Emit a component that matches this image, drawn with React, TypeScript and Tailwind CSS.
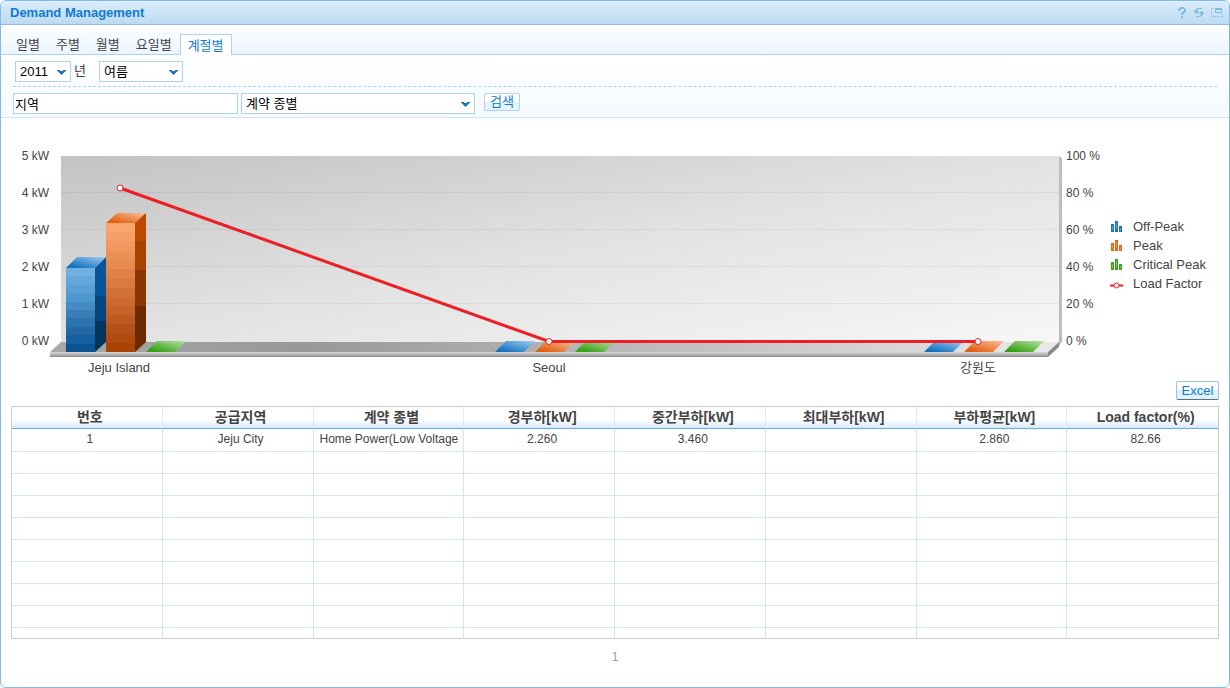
import React from "react";

const tabs = ["일별", "주별", "월별", "요일별", "계절별"];

const columns = [
  "번호",
  "공급지역",
  "계약 종별",
  "경부하[kW]",
  "중간부하[kW]",
  "최대부하[kW]",
  "부하평균[kW]",
  "Load factor(%)",
];

const rows = [
  ["1", "Jeju City", "Home Power(Low Voltage", "2.260", "3.460", "", "2.860", "82.66"],
];

const emptyRows = Array.from({ length: 9 }, (_, i) => i);

function Chevron() {
  return (
    <svg
      className="pointer-events-none absolute right-[5px] top-1/2 -mt-0.5"
      width="9"
      height="5"
      viewBox="0 0 9 5"
      shapeRendering="crispEdges"
      aria-hidden="true"
    >
      <path d="M0 0h3v1h3v-1h3v1h-1v1h-1v1h-1v1h-1v1h-1v-1h-1v-1h-1v-1h-1v-1h-1z" fill="#0f7bd0" />
    </svg>
  );
}

type DropDownProps = { label: string; options: string[]; className: string };

function DropDown({ label, options, className }: DropDownProps) {
  return (
    <span className={"relative block h-[21px] " + className}>
      <select
        aria-label={label}
        className="block h-full w-full appearance-none border border-[#b2d2ec] bg-white pl-1 pr-4 text-[13px] leading-4 text-black outline-none"
      >
        {options.map((o) => (
          <option key={o}>{o}</option>
        ))}
      </select>
      <Chevron />
    </span>
  );
}

function HelpIcon() {
  return (
    <svg width="10" height="12" viewBox="0 0 10 12" shapeRendering="crispEdges" fill="#7dbde8">
      <path d="M3 0h4v1h1v1h1v3h-1v1h-1v1h-1v1h-2v-2h1v-1h1v-1h1v-2h-3v1h-1v1h-2v-2h1v-1h1zM4 9h2v2h-2z" />
    </svg>
  );
}

function RefreshIcon() {
  return (
    <svg width="10" height="10" viewBox="0 0 10 10" shapeRendering="crispEdges" fill="#7dbde8">
      <path d="M3 0h5v1h-4v1h-1v1h2v1h-1v1h-1v1h-1v-1h-1v-1h-1v-1h1v-1h1v-1h1z" />
      <path d="M7 3h1v1h1v1h1v1h-1v1h-1v1h-1v1h-5v-1h4v-1h1v-1h-2v-1h1v-1h1z" />
    </svg>
  );
}

function WindowIcon() {
  return (
    <svg width="12" height="10" viewBox="0 0 12 10" shapeRendering="crispEdges">
      <path d="M0 .5h4M0 8.500h12" stroke="#7dbde8" strokeDasharray="1 1" />
      <path d="M.5 0v9M11.5 6v3" stroke="#7dbde8" strokeDasharray="1 1" />
      <path d="M4 0h7v5h-7zM5 2v2h5v-2z" fill="#7dbde8" fillRule="evenodd" />
    </svg>
  );
}

const blueBands = ["#72b0e2", "#66a7db", "#5a9fd5", "#4f97cf", "#438cc5", "#397fb6", "#2a72b0", "#2368a4", "#13609e", "#0a5492"];
const orangeBands = [
  "#f8a56e", "#f59f67", "#f0985f", "#eb9158", "#e58a50", "#df8148", "#d97a41", "#d27138",
  "#cb6930", "#c56229", "#bc5a20", "#b55118", "#b04b10", "#a94204",
];

type BandsProps = { x: number; y: number; height: number; colors: string[] };

function Bands({ x, y, height, colors }: BandsProps) {
  const edges = colors.map((_, i) => Math.round((i * height) / colors.length));
  return (
    <g shapeRendering="crispEdges">
      {colors.map((c, i) => (
        <rect key={c} x={x} y={y + edges[i]} width={29} height={(edges[i + 1] ?? height) - edges[i]} fill={c} />
      ))}
    </g>
  );
}

function FlatBar({ x, fill }: { x: number; fill: string }) {
  return <path d={`M${x} 352h29l11 -11h-29z`} fill={fill} />;
}

function DemandChart() {
  return (
    <svg
      className="block min-w-0 flex-1 font-['Liberation_Sans','Noto_Sans_CJK_KR',sans-serif] text-[12px]"
      viewBox="1 118 1100 262"
      role="img"
      aria-label="Demand by region"
    >
      <defs>
        <linearGradient id="wall" x1="0" y1="0" x2="1" y2="1">
          <stop offset="0" stopColor="#c3c3c3" />
          <stop offset="0.12" stopColor="#cacaca" />
          <stop offset="0.5" stopColor="#e2e2e2" />
          <stop offset="1" stopColor="#f7f7f7" />
        </linearGradient>
        <linearGradient id="floor" x1="0" y1="0" x2="1" y2="0">
          <stop offset="0" stopColor="#a8a8a8" />
          <stop offset="0.25" stopColor="#989898" />
          <stop offset="0.6" stopColor="#bcbcbc" />
          <stop offset="1" stopColor="#e9e9e9" />
        </linearGradient>
        <linearGradient id="lip" x1="0" y1="0" x2="0" y2="1">
          <stop offset="0" stopColor="#d8d8d8" />
          <stop offset="0.5" stopColor="#b5b5b5" />
          <stop offset="1" stopColor="#8a8a8a" />
        </linearGradient>
        <linearGradient id="topBlue" x1="0" y1="1" x2="1" y2="0">
          <stop offset="0.15" stopColor="#1271bf" />
          <stop offset="1" stopColor="#a3cdef" />
        </linearGradient>
        <linearGradient id="topOrange" x1="0" y1="1" x2="1" y2="0">
          <stop offset="0.15" stopColor="#e05f10" />
          <stop offset="1" stopColor="#fbc09a" />
        </linearGradient>
        <linearGradient id="topGreen" x1="0" y1="1" x2="1" y2="0">
          <stop offset="0.15" stopColor="#35a015" />
          <stop offset="1" stopColor="#b6e4a3" />
        </linearGradient>
      </defs>

      <path d="M1059 156l3 2v184l-3 4z" fill="#bdbdbd" />
      <rect x="61" y="156" width="998" height="186" fill="url(#wall)" />
      <path
        d="M61 192.500H1059M61 229.500H1059M61 266.500H1059M61 303.500H1059"
        stroke="#000000"
        strokeOpacity="0.05"
      />
      <path d="M61 342h998l-11 10h-998z" fill="url(#floor)" />
      <rect x="50" y="352" width="998" height="5" fill="url(#lip)" />
      <path d="M1048 352l11 -10v5l-11 10z" fill="#8b8b8b" />

      <Bands x={66} y={268} height={84} colors={blueBands} />
      <path d="M66 268l11 -11h29l-11 11z" fill="url(#topBlue)" />
      <path d="M95 268l11 -11v39h-11z" fill="#07549a" />
      <path d="M95 296h11v25h-11z" fill="#04457f" />
      <path d="M95 321h11v21l-11 10z" fill="#033459" />

      <Bands x={106} y={223} height={129} colors={orangeBands} />
      <path d="M106 223l11 -10h29l-11 10z" fill="url(#topOrange)" />
      <path d="M135 223l11 -10v28h-11z" fill="#bb4a00" />
      <path d="M135 241h11v29h-11z" fill="#a84200" />
      <path d="M135 270h11v36h-11z" fill="#8b3703" />
      <path d="M135 306h11v36l-11 10z" fill="#6b2900" />
      <FlatBar x={146} fill="url(#topGreen)" />

      <FlatBar x={495} fill="url(#topBlue)" />
      <FlatBar x={535} fill="url(#topOrange)" />
      <FlatBar x={575} fill="url(#topGreen)" />
      <FlatBar x={924} fill="url(#topBlue)" />
      <FlatBar x={964} fill="url(#topOrange)" />
      <FlatBar x={1004} fill="url(#topGreen)" />

      <path d="M120 188L549 341.500H978" fill="none" stroke="#ec2024" strokeWidth="3" />
      <g fill="#ffffff" stroke="#ec2024">
        <circle cx="120" cy="188" r="3" />
        <circle cx="549" cy="341.5" r="3" />
        <circle cx="978" cy="341.5" r="3" />
      </g>

      <g fill="#444444" textAnchor="end">
        {[5, 4, 3, 2, 1, 0].map((v, i) => (
          <text key={v} x="49" y={160 + i * 37}>{`${v} kW`}</text>
        ))}
      </g>
      <g fill="#444444">
        {[100, 80, 60, 40, 20, 0].map((v, i) => (
          <text key={v} x="1066" y={160 + i * 37}>{`${v} %`}</text>
        ))}
      </g>
      <g fill="#444444" textAnchor="middle" className="text-[13px]">
        <text x="119" y="372">Jeju Island</text>
        <text x="549" y="372">Seoul</text>
        <text x="978" y="372">강원도</text>
      </g>
    </svg>
  );
}

function BarsIcon({ color }: { color: string }) {
  return (
    <svg width="13" height="11" viewBox="0 0 13 11" shapeRendering="crispEdges" aria-hidden="true">
      <path d="M1 3h3v8h-3zM5 0h3v11h-3zM9 5h3v6h-3z" fill={color} />
      <path d="M2 5h1v4h-1zM6 2h1v6h-1zM10 7h1v3h-1z" fill="#ffffff" fillOpacity="0.3" />
    </svg>
  );
}

function LineIcon() {
  return (
    <svg width="13" height="11" viewBox="0 0 13 11" aria-hidden="true">
      <path d="M0 7.500H13" stroke="#ec2024" strokeWidth="2" />
      <circle cx="6.5" cy="7.5" r="2.5" fill="#ffffff" stroke="#ec2024" />
    </svg>
  );
}

const legend = [
  { label: "Off-Peak", icon: <BarsIcon color="#1874bf" /> },
  { label: "Peak", icon: <BarsIcon color="#e8640f" /> },
  { label: "Critical Peak", icon: <BarsIcon color="#3aa11e" /> },
  { label: "Load Factor", icon: <LineIcon /> },
];

const iconButtons = [
  { label: "Help", icon: <HelpIcon /> },
  { label: "Refresh", icon: <RefreshIcon /> },
  { label: "Window", icon: <WindowIcon /> },
];

export default function App() {
  return (
    <main className="flex min-h-screen flex-col overflow-hidden rounded-md border border-[#7fbce8] bg-white font-['Liberation_Sans','Noto_Sans_CJK_KR',sans-serif] text-[13px] leading-4 text-[#444444]">
      <header className="flex h-6 items-center justify-between border-b border-[#9bb9e6] bg-linear-to-b from-[#dcedfb] to-[#bbdaf1] pl-[9px] pr-1.5">
        <h1 className="text-[13px] font-bold text-[#0f7bd0]">Demand Management</h1>
        <div className="flex items-center gap-[7px]">
          {iconButtons.map((b) => (
            <button key={b.label} type="button" aria-label={b.label} className="flex h-4 items-center">
              {b.icon}
            </button>
          ))}
        </div>
      </header>

      <nav className="flex h-[30px] items-end border-b border-[#b0d2ee] bg-linear-to-b from-white to-[#ebf4fe] pl-[7px]">
        {tabs.map((t, i) => (
          <a
            key={t}
            href="#"
            aria-current={i === 4 ? "page" : undefined}
            className={
              i === 4
                ? "-mb-px flex h-[21px] items-center border border-b-0 border-[#b0d2ee] bg-white px-[7px] pt-0.5 text-[#0f7bd0]"
                : "flex h-5 items-center px-2 pt-0.5"
            }
          >
            {t}
          </a>
        ))}
      </nav>

      <form
        className="flex flex-col border-b border-[#cfe3f4] bg-linear-to-b from-white to-[#f5faff]"
        onSubmit={(e) => e.preventDefault()}
      >
        <div className="mx-3 flex items-start border-b border-dashed border-[#b0d2ee] pb-1 pl-0.5 pt-1.5">
          <DropDown label="연도" options={["2011"]} className="w-14" />
          <span className="ml-[3px] mt-0.5">년</span>
          <DropDown label="계절" options={["여름"]} className="ml-[13px] w-[84px]" />
        </div>
        <div className="flex items-start gap-[3px] px-3 pb-[3px] pt-1.5">
          <input
            aria-label="지역"
            defaultValue="지역"
            className="h-[21px] w-[225px] border border-[#b2d2ec] bg-white px-px text-[13px] leading-4 text-black outline-none"
          />
          <DropDown label="계약 종별" options={["계약 종별"]} className="w-[234px]" />
          <button
            type="submit"
            className="ml-1.5 flex h-[18px] w-9 items-center justify-center rounded-xs border border-[#b2d2ec] bg-linear-to-b from-white from-50% to-[#e4f4fd] to-50% text-[#0f7bd0]"
          >
            검색
          </button>
        </div>
      </form>

      <section className="flex items-center">
        <DemandChart />
        <ul className="flex w-32 shrink-0 flex-col gap-[3px] pl-[9px] pt-3">
          {legend.map((l) => (
            <li key={l.label} className="flex items-center gap-2.5">
              {l.icon}
              <span>{l.label}</span>
            </li>
          ))}
        </ul>
      </section>

      <section className="flex flex-col px-2.5 pt-px">
        <button
          type="button"
          className="mb-1.5 flex h-[19px] w-[43px] items-center justify-center self-end rounded-xs border border-[#9cc4df] border-b-[#5c6f80] bg-linear-to-b from-white from-50% to-[#e0f2fc] to-50% text-[#0f7bd0]"
        >
          Excel
        </button>
        <div className="h-[233px] overflow-hidden border border-[#cccccc]">
          <table className="w-full table-fixed border-separate border-spacing-0">
            <thead>
              <tr className="h-[22px]">
                {columns.map((c) => (
                  <th
                    key={c}
                    className="border-b border-r border-b-[#6cabdf] border-r-[#dceafa] bg-linear-to-b from-white from-60% to-[#d9eafb] p-0 pb-0.5 pl-1.5 text-[14px] font-bold last:border-r-0"
                  >
                    {c}
                  </th>
                ))}
              </tr>
            </thead>
            <tbody>
              {rows.map((r) => (
                <tr key={r[0]} className="h-[23px]">
                  {r.map((v, i) => (
                    <td
                      key={columns[i]}
                      className={
                        i === 2
                          ? "overflow-hidden whitespace-nowrap border-b border-r border-[#d3e5f4] p-0 pb-0.5 pl-1.5 text-[12px]"
                          : "border-b border-r border-[#d3e5f4] p-0 pb-0.5 pl-1.5 text-center text-[12px] last:border-r-0"
                      }
                    >
                      {v}
                    </td>
                  ))}
                </tr>
              ))}
              {emptyRows.map((n) => (
                <tr key={n} className="h-[22px]">
                  {columns.map((c) => (
                    <td key={c} className="border-b border-r border-[#d3e5f4] p-0 last:border-r-0" />
                  ))}
                </tr>
              ))}
            </tbody>
          </table>
        </div>
        <p className="pt-2.5 text-center text-[12px] text-[#999999]">1</p>
      </section>
    </main>
  );
}
